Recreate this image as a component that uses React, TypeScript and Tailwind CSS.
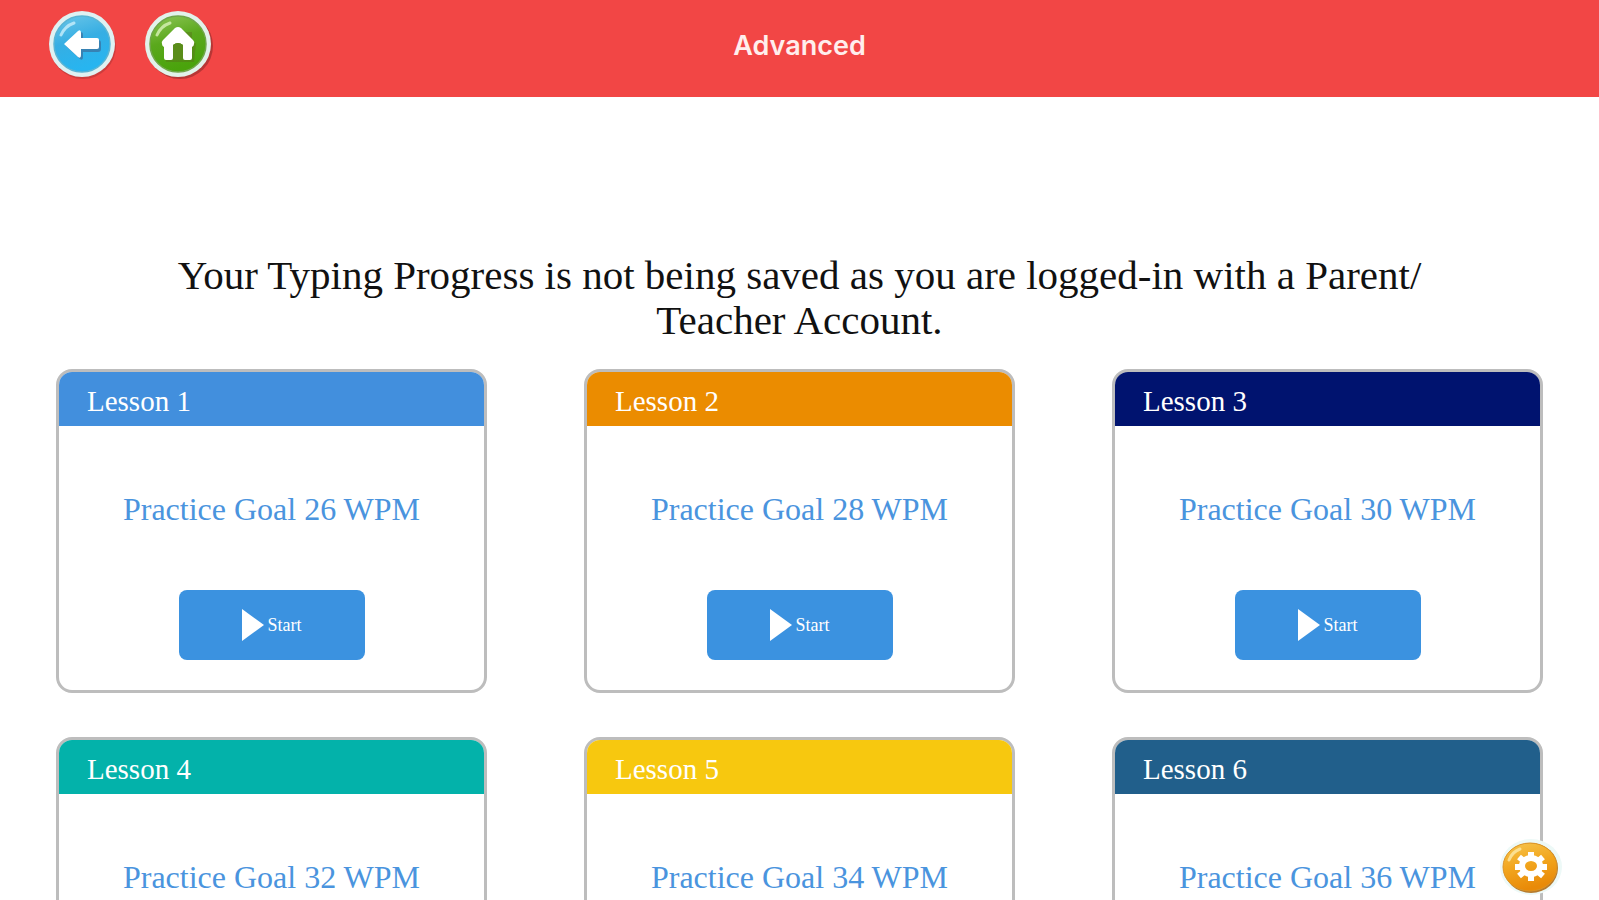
import { useState } from 'react'

type Lesson = {
  id: number
  goal: number
  color: string
}

const lessons: Lesson[] = [
  { id: 1, goal: 26, color: 'bg-[#428fdd]' },
  { id: 2, goal: 28, color: 'bg-[#eb8c00]' },
  { id: 3, goal: 30, color: 'bg-[#00136f]' },
  { id: 4, goal: 32, color: 'bg-[#03b2aa]' },
  { id: 5, goal: 34, color: 'bg-[#f7c80f]' },
  { id: 6, goal: 36, color: 'bg-[#215f8b]' },
]

function BackIcon() {
  return (
    <svg viewBox="0 0 72 72" className="w-18 h-18" aria-hidden="true">
      <defs>
        <linearGradient id="back-fill" x1="0" y1="0" x2="0.3" y2="1">
          <stop offset="0" stopColor="#6cc6e8" />
          <stop offset="0.5" stopColor="#36aee3" />
          <stop offset="1" stopColor="#27b5f0" />
        </linearGradient>
      </defs>
      <circle cx="37" cy="38" r="33" fill="#8d2a2c" opacity="0.35" />
      <circle cx="36" cy="36" r="33" fill="#dff1f2" />
      <circle cx="36" cy="36" r="28" fill="url(#back-fill)" stroke="#58b4d4" strokeWidth="1.5" />
      <path d="M15 27 Q19 18 28 15" fill="none" stroke="#c9effb" strokeWidth="3" strokeLinecap="round" opacity="0.8" />
      <path d="M20 38 L34 25 Q37 23 37 27 L37 32 L52 32 Q55 32 55 35 L55 41 Q55 44 52 44 L37 44 L37 49 Q37 53 34 51 Z" fill="#3a6d9c" opacity="0.7" />
      <path d="M18 36 L32 23 Q35 21 35 25 L35 30 L51 30 Q53 30 53 32 L53 39 Q53 41 51 41 L35 41 L35 47 Q35 51 32 49 Z" fill="#fff" />
    </svg>
  )
}

function HomeIcon() {
  return (
    <svg viewBox="0 0 72 72" className="w-18 h-18" aria-hidden="true">
      <defs>
        <linearGradient id="home-fill" x1="0" y1="0" x2="0.3" y2="1">
          <stop offset="0" stopColor="#8ec656" />
          <stop offset="0.5" stopColor="#5aa81c" />
          <stop offset="1" stopColor="#4aa30c" />
        </linearGradient>
      </defs>
      <circle cx="38" cy="38" r="33" fill="#7c2526" opacity="0.5" />
      <circle cx="36" cy="36" r="33" fill="#e2f2ea" />
      <circle cx="36" cy="36" r="28" fill="url(#home-fill)" stroke="#6fa648" strokeWidth="1.5" />
      <path d="M15 27 Q19 18 28 15" fill="none" stroke="#d9f3b8" strokeWidth="3" strokeLinecap="round" opacity="0.8" />
      <path d="M22 36 L38 21 L44 24 L50 24 L50 31 L54 36 L52 54 L24 54 Z" fill="#5b6b1c" opacity="0.4" />
      <path d="M20 36 Q19 34 21 32 L33 20 Q36 18 39 20 L51 32 Q53 34 52 36 Q52 38 50 39 L50 50 Q50 52 48 52 L43 52 Q41 52 41 50 L41 37 Q36 33 31 37 L31 50 Q31 52 29 52 L24 52 Q22 52 22 50 L22 39 Q20 38 20 36 Z" fill="#fff" />
      <path d="M31 52 L31 37 Q36 33 41 37 L41 52 Z" fill="#5a8d1a" />
    </svg>
  )
}

function GearIcon() {
  return (
    <svg viewBox="0 0 64 60" className="w-16 h-15" aria-hidden="true">
      <defs>
        <linearGradient id="gear-fill" x1="0" y1="0" x2="0.3" y2="1">
          <stop offset="0" stopColor="#f6c651" />
          <stop offset="0.5" stopColor="#f2a71f" />
          <stop offset="1" stopColor="#e98a08" />
        </linearGradient>
      </defs>
      <ellipse cx="32" cy="30" rx="31" ry="28" fill="#edf9f7" />
      <ellipse cx="32" cy="31" rx="27" ry="25" fill="#b57a2e" />
      <ellipse cx="31" cy="30" rx="27" ry="24" fill="url(#gear-fill)" stroke="#dc9426" strokeWidth="1" />
      <path d="M10 23 Q13 15 21 12" fill="none" stroke="#fdeaa9" strokeWidth="3" strokeLinecap="round" opacity="0.8" />
      <g stroke="#fff" strokeWidth="6">
        <path d="M32 15 V21 M32 38 V44 M16 30 H22 M42 30 H48" />
        <path d="M20 20 L26 25 M38 34 L44 39 M44 20 L38 25 M26 34 L20 39" />
      </g>
      <ellipse cx="32" cy="29" rx="9" ry="8" fill="none" stroke="#fff" strokeWidth="6" />
    </svg>
  )
}

function LessonCard({ lesson, onStart }: { lesson: Lesson; onStart: (id: number) => void }) {
  return (
    <article className="overflow-hidden rounded-2xl border-3 border-[#bdbdbd] bg-white">
      <h2 className={`${lesson.color} px-7 pt-3 pb-2 text-[29px] leading-[34px] text-white`}>
        Lesson {lesson.id}
      </h2>
      <div className="flex flex-col items-center pt-16 pb-[30px]">
        <p className="text-[32px] leading-[38px] text-[#4a94de]">Practice Goal {lesson.goal} WPM</p>
        <button
          onClick={() => onStart(lesson.id)}
          className="mt-[62px] flex h-[70px] w-[186px] items-center justify-center gap-1 rounded-lg bg-[#3b92e0] text-lg text-white"
        >
          <svg viewBox="0 0 22 32" className="h-8 w-[22px]" fill="currentColor" aria-hidden="true">
            <path d="M0 0 L22 16 L0 32 Z" />
          </svg>
          Start
        </button>
      </div>
    </article>
  )
}

export default function App() {
  const [, setActiveLesson] = useState<number | null>(null)

  return (
    <div className="flex h-screen flex-col bg-white font-['Liberation_Serif',serif]">
      <header className="grid shrink-0 grid-cols-[1fr_auto_1fr] items-center bg-[#f24645] px-[46px] pt-2 pb-[17px]">
        <nav className="flex gap-6">
          <button aria-label="Back">
            <BackIcon />
          </button>
          <button aria-label="Home">
            <HomeIcon />
          </button>
        </nav>
        <h1 className="pt-1 font-['Inter',sans-serif] text-[27px] leading-8 font-semibold text-[#ffeeed]">Advanced</h1>
      </header>

      <main className="flex-1 overflow-y-auto px-14 pt-[156px] pb-11 [scrollbar-width:none]">
        <p className="text-center text-[41px] leading-[45px] text-[#111]">
          Your Typing Progress is not being saved as you are logged-in with a Parent/
          <br />
          Teacher Account.
        </p>
        <section className="mt-[26px] grid grid-cols-3 gap-x-[97px] gap-y-11">
          {lessons.map((lesson) => (
            <LessonCard key={lesson.id} lesson={lesson} onStart={setActiveLesson} />
          ))}
        </section>
      </main>

      <button aria-label="Settings" className="fixed right-9 bottom-[3px]">
        <GearIcon />
      </button>
    </div>
  )
}
